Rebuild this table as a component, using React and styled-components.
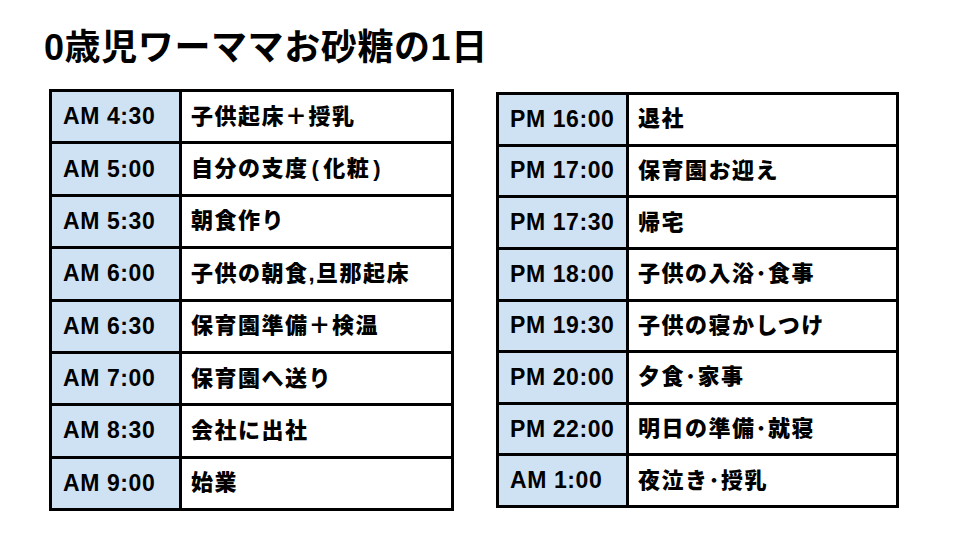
import styled, { createGlobalStyle } from 'styled-components'

const GlobalStyle = createGlobalStyle`
  body {
    margin: 0;
    background: #fff;
    font-family: "Liberation Sans", "Noto Sans CJK JP", sans-serif;
    color: #000;
  }
`;

const Page = styled.div`
  width: 960px;
  height: 540px;
  overflow: hidden;
  display: flex;
  flex-direction: column;
`;

const Title = styled.h1`
  margin: 26px 0 0 44px;
  font-size: 36px;
  line-height: 44px;
  font-weight: bold;
  letter-spacing: 0.6px;
`;

const Tables = styled.div`
  display: flex;
  align-items: flex-start;
  gap: 42px;
  margin: 19px 0 0 49px;
`;

const Table = styled.table`
  border-collapse: collapse;
  width: ${(p) => p.$w}px;
  height: ${(p) => p.$h}px;
  margin-top: ${(p) => p.$top || 0}px;
  table-layout: fixed;
`;

const TimeCell = styled.td`
  width: 116px;
  background: #cfe2f3;
  border: 3px solid #000;
  padding: 0 0 0 11px;
  font-size: 23px;
  font-weight: bold;
  letter-spacing: 0.6px;
  vertical-align: middle;
  white-space: nowrap;
`;

const TaskCell = styled.td`
  background: #fff;
  border: 3px solid #000;
  padding: 0 0 6px 9px;
  font-size: 22px;
  font-weight: 900;
  letter-spacing: 1.5px;
  vertical-align: middle;
  white-space: nowrap;
`;

const Paren = styled.span`
  margin: 0 3px;
`;

const morning = [
  ['AM 4:30', '子供起床＋授乳'],
  ['AM 5:00', <>自分の支度<Paren>(</Paren>化粧<Paren>)</Paren></>],
  ['AM 5:30', '朝食作り'],
  ['AM 6:00', '子供の朝食,旦那起床'],
  ['AM 6:30', '保育園準備＋検温'],
  ['AM 7:00', '保育園へ送り'],
  ['AM 8:30', '会社に出社'],
  ['AM 9:00', '始業'],
];

const evening = [
  ['PM 16:00', '退社'],
  ['PM 17:00', '保育園お迎え'],
  ['PM 17:30', '帰宅'],
  ['PM 18:00', '子供の入浴･食事'],
  ['PM 19:30', '子供の寝かしつけ'],
  ['PM 20:00', '夕食･家事'],
  ['PM 22:00', '明日の準備･就寝'],
  ['AM 1:00', '夜泣き･授乳'],
];

const Schedule = ({ rows, w, h, top }) => (
  <Table $w={w} $h={h} $top={top}>
    <tbody>
      {rows.map(([time, task]) => (
        <tr key={time}>
          <TimeCell>{time}</TimeCell>
          <TaskCell>{task}</TaskCell>
        </tr>
      ))}
    </tbody>
  </Table>
);

export default function App() {
  return (
    <Page>
      <GlobalStyle />
      <Title>0歳児ワーママお砂糖の1日</Title>
      <Tables>
        <Schedule rows={morning} w={405} h={422} />
        <Schedule rows={evening} w={403} h={416} top={3} />
      </Tables>
    </Page>
  );
}
